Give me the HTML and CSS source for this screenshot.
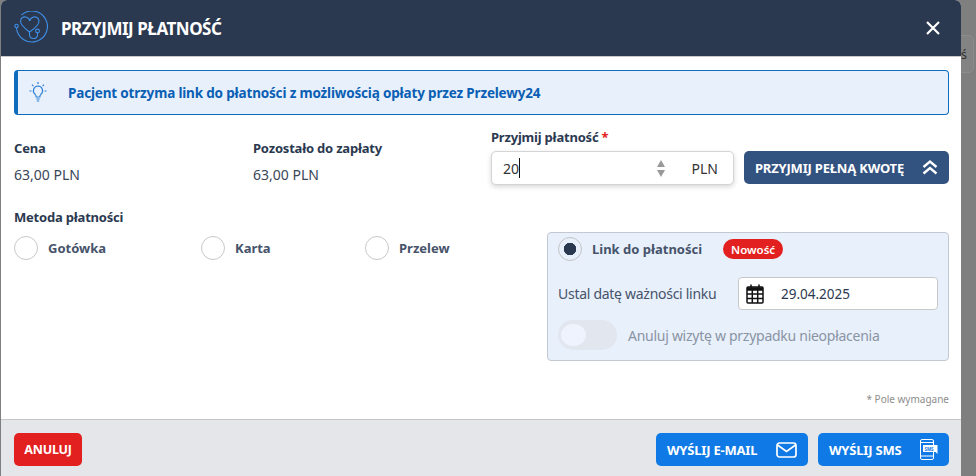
FILE: index.html
```html
<!DOCTYPE html>
<html lang="pl">
<head>
<meta charset="utf-8">
<title>Przyjmij płatność</title>
<link rel="stylesheet" href="styles.css">
</head>
<body>
<div class="behind-tab">ś</div>
<div class="modal">
  <header class="head">
    <svg class="logo" viewBox="0 0 34 34" fill="none" stroke="#3f8fe8" stroke-width="1.100"><path d="M7.500 4A15.500 15.500 0 1 1 2.500 17"/><circle cx="2.500" cy="15" r="1.700"/><path d="M16 9.500C14.500 6.500 11 5 8.500 6.500 6 8 6 11.500 8 14c2 2.800 5 5.200 7.500 7 3-2 6-4.300 8-7 2-2.500 2-6-.5-7.500-2.500-1.500-6 0-7.500 3z"/><path d="M15.500 21v2.500c0 5 8 5.500 8 .5v-2.500"/><circle cx="23.500" cy="20" r="1.900"/></svg>
    <h1 class="title">PRZYJMIJ PŁATNOŚĆ</h1>
    <svg class="close" viewBox="0 0 14 14" stroke="#fff" stroke-width="2.200"><path d="M1 1l12 12M13 1L1 13"/></svg>
  </header>
  <main class="body">
    <div class="notice">
      <svg class="bulb" viewBox="0 0 18 20" fill="none" stroke="#2f80d8" stroke-width="1.200"><path d="M9 4a4.700 4.700 0 0 0-2.900 8.300c.8.800 1.100 1.700 1.100 2.700h3.600c0-1 .3-1.900 1.100-2.700A4.700 4.700 0 0 0 9 4z"/><path d="M7.300 17h3.400M7.800 19h2.400M9 0v2M3 2.700l1.400 1.400M15 2.700l-1.400 1.400M.5 9h2M15.500 9h2"/></svg>
      <span>Pacjent otrzyma link do płatności z możliwością opłaty przez Przelewy24</span>
    </div>
    <div class="pay-row">
      <div class="stat stat-price">
        <div class="label">Cena</div>
        <div class="value">63,00 PLN</div>
      </div>
      <div class="stat stat-rest">
        <div class="label">Pozostało do zapłaty</div>
        <div class="value">63,00 PLN</div>
      </div>
      <div class="accept">
        <div class="label">Przyjmij płatność <span class="req">*</span></div>
        <div class="accept-row">
          <div class="amount">
            <span class="amount-text">20</span><span class="caret"></span>
            <span class="spin"><i class="up"></i><i class="down"></i></span>
            <span class="cur">PLN</span>
          </div>
          <button class="btn btn-full">PRZYJMIJ PEŁNĄ KWOTĘ
            <svg class="chev" viewBox="0 0 16 15" fill="none" stroke="#fff" stroke-width="2.300"><path d="M1.500 7L8 1.500 14.500 7M1.500 13.500L8 8l6.500 5.500"/></svg>
          </button>
        </div>
      </div>
    </div>
    <div class="method-label label">Metoda płatności</div>
    <div class="methods">
      <div class="radios">
        <label class="radio r1"><span class="dot"></span>Gotówka</label>
        <label class="radio r2"><span class="dot"></span>Karta</label>
        <label class="radio r3"><span class="dot"></span>Przelew</label>
      </div>
      <section class="link-box">
        <div class="link-top">
          <span class="dot dot-on"></span><span class="link-name">Link do płatności</span><span class="badge">Nowość</span>
        </div>
        <div class="date-row">
          <span>Ustal datę ważności linku</span>
          <div class="date">
            <svg class="cal" viewBox="0 0 18 20" fill="none" stroke="#111" stroke-width="1.500"><rect x="1" y="3" width="16" height="16" rx="1"/><path d="M1 5h16" stroke-width="3.500"/><path d="M5 .5v3M13 .5v3M1 10h16M1 14.500h16M6.300 6v13M11.700 6v13"/></svg>
            <span>29.04.2025</span>
          </div>
        </div>
        <div class="toggle-row">
          <span class="toggle"><span class="knob"></span></span>
          <span>Anuluj wizytę w przypadku nieopłacenia</span>
        </div>
      </section>
    </div>
    <div class="required">* Pole wymagane</div>
  </main>
  <footer class="foot">
    <button class="btn btn-cancel">ANULUJ</button>
    <div class="foot-right">
      <button class="btn btn-send btn-mail">WYŚLIJ E-MAIL
        <svg class="ico-mail" viewBox="0 0 21 16" fill="none" stroke="#fff" stroke-width="1.700"><rect x="1" y="1" width="19" height="14" rx="2.500"/><path d="M1.500 3l9 6.500 9-6.500"/></svg>
      </button>
      <button class="btn btn-send btn-sms">WYŚLIJ SMS
        <svg class="ico-sms" viewBox="0 0 18 21" fill="none" stroke="#fff" stroke-width="1"><rect x=".5" y=".5" width="13" height="20" rx="1.500"/><path d="M.5 3.500h13M.5 17h13"/><path d="M3 6h14.500v9l-2-2H3z" fill="#fff" stroke="none"/><text x="4.600" y="11.500" class="sms-text">SMS</text></svg>
      </button>
    </div>
  </footer>
</div>
</body>
</html>
```
FILE: styles.css
```css
* { box-sizing: border-box; }
html, body { height: 100%; }
body {
  margin: 0;
  height: 476px;
  overflow: hidden;
  background: #7f7f7f;
  font-family: "Noto Sans", "Liberation Sans", sans-serif;
  color: #2b3950;
  position: relative;
}
.behind-tab {
  position: absolute;
  left: 950px;
  top: 35px;
  width: 24px;
  height: 38px;
  border: 1px solid #8c8c8c;
  border-radius: 5px;
  background: #838383;
  font-size: 13px;
  line-height: 36px;
  text-align: right;
  padding-right: 6px;
  color: #333;
}
.modal {
  position: absolute;
  left: 1px;
  top: 0;
  width: 960px;
  height: 476px;
  background: #fff;
  border-radius: 6px 6px 0 0;
  display: flex;
  flex-direction: column;
  overflow: hidden;
}
.head {
  height: 57px;
  flex: none;
  background: #2b3950;
  display: flex;
  align-items: center;
  padding: 0 21px 0 13px;
  border-bottom: 1px solid #c9c9c9;
}
.logo { width: 34px; height: 34px; flex: none; }
.title {
  margin: 0 0 0 13px;
  flex: 1;
  font-size: 17px;
  font-weight: 700;
  color: #fff;
  letter-spacing: -.48px;
}
.close { width: 14px; height: 14px; }
.body {
  flex: 1;
  padding: 13px 12px 0 13px;
  display: flex;
  flex-direction: column;
  min-height: 0;
}
.notice {
  height: 45px;
  flex: none;
  border: 1px solid #0f6cbd;
  border-left-width: 4px;
  border-radius: 4px;
  background: #e8f0fc;
  display: flex;
  align-items: center;
  padding-left: 11px;
  gap: 21px;
  font-size: 13.500px;
  font-weight: 700;
  color: #0a5fb4;
  letter-spacing: -.17px;
}
.bulb { width: 18px; height: 20px; flex: none; margin-top: -2px; }
.pay-row { display: flex; margin-top: 13px; height: 72px; flex: none; }
.label { font-size: 13px; font-weight: 700; color: #2b3950; line-height: 18px; letter-spacing: -.2px; }
.value { font-size: 14px; color: #3a4658; margin-top: 8px; line-height: 20px; }
.stat { padding-top: 11px; }
.stat-price { width: 239px; }
.stat-rest { width: 238px; }
.accept { flex: 1; }
.req { color: #e32020; }
.accept-row { display: flex; gap: 10px; margin-top: 5px; }
.amount {
  width: 243px;
  height: 34px;
  background: #fff;
  border: 1px solid #d4d4d4;
  border-radius: 5px;
  box-shadow: 0 2px 5px rgba(0,0,0,.16);
  display: flex;
  align-items: center;
  padding: 0 15px 0 11px;
  font-size: 14px;
  color: #333;
}
.caret { width: 1px; height: 20px; background: #111; }
.spin { margin-left: auto; display: flex; flex-direction: column; gap: 3px; margin-right: 27px; }
.spin i { display: block; width: 0; height: 0; border-left: 4.500px solid transparent; border-right: 4.500px solid transparent; }
.spin .up { border-bottom: 7px solid #999; }
.spin .down { border-top: 7px solid #999; }
.btn {
  border: 0;
  height: 33px;
  border-radius: 5px;
  font-family: inherit;
  font-size: 13px;
  font-weight: 700;
  color: #fff;
  display: flex;
  align-items: center;
  letter-spacing: -.2px;
}
.btn-full {
  width: 205px;
  background: #32527f;
  padding: 0 11px;
  justify-content: space-between;
}
.chev { width: 16px; height: 15px; }
.method-label { margin-top: 8px; }
.methods { display: flex; justify-content: space-between; }
.radios { display: flex; padding-top: 10px; height: 40px; }
.radio { display: flex; align-items: center; gap: 10px; font-size: 13px; font-weight: 700; color: #46536a; height: 24px; }
.r1 { width: 187px; }
.r2 { width: 164px; }
.dot {
  width: 24px;
  height: 24px;
  border: 1px solid #c8c8c8;
  border-radius: 50%;
  background: #fff;
  flex: none;
}
.dot-on { background: radial-gradient(circle, #2b3950 0 6px, transparent 6.500px); border-color: #c4c4c4; }
.link-box {
  width: 402px;
  height: 129px;
  margin-top: 6px;
  border: 1px solid #c4c8d0;
  border-radius: 4px;
  background: #e8f0fc;
  padding: 4px 10px 0 10px;
  font-size: 14px;
  color: #46536a;
}
.link-top { display: flex; align-items: center; height: 24px; }
.link-name { font-weight: 700; font-size: 13px; margin-left: 10px; }
.badge {
  margin-left: 21px;
  background: #e32020;
  color: #fff;
  font-size: 11.500px;
  font-weight: 600;
  height: 20px;
  width: 60px;
  border-radius: 10px;
  display: flex;
  align-items: center;
  justify-content: center;
}
.date-row { display: flex; align-items: center; justify-content: space-between; margin-top: 16px; letter-spacing: -.28px; }
.date {
  width: 200px;
  height: 33px;
  background: #fff;
  border: 1px solid #c8c8c8;
  border-radius: 4px;
  display: flex;
  align-items: center;
  padding-left: 7px;
  gap: 17px;
  color: #2b3950;
  font-size: 13.500px;
  letter-spacing: 0;
}
.cal { width: 18px; height: 20px; flex: none; }
.toggle-row { display: flex; align-items: center; gap: 11px; margin-top: 10px; color: #8a94a3; letter-spacing: -.27px; }
.toggle { width: 59px; height: 30px; border-radius: 15px; background: #e1e6ef; padding: 4px 3px; flex: none; }
.knob { display: block; width: 25px; height: 22px; border-radius: 50%; background: #eef3fd; }
.required { margin-top: auto; margin-bottom: 13px; text-align: right; font-size: 10px; color: #8d8d8d; }
.foot {
  height: 57px;
  flex: none;
  background: #e4e6ea;
  border-top: 1px solid #c6c6c6;
  padding: 13px 12px 0 13px;
  display: flex;
  justify-content: space-between;
}
.btn-cancel { width: 68px; background: #e32020; justify-content: center; font-size: 12.500px; }
.foot-right { display: flex; gap: 10px; }
.btn-send { background: #0f7ae5; padding: 0 11px; justify-content: space-between; }
.btn-mail { width: 152px; }
.btn-sms { width: 131px; }
.ico-mail { width: 21px; height: 16px; }
.ico-sms { width: 18px; height: 21px; }
.sms-text { font-size: 4.500px; font-weight: 700; fill: #0f7ae5; stroke: none; letter-spacing: -.1px; }
```
